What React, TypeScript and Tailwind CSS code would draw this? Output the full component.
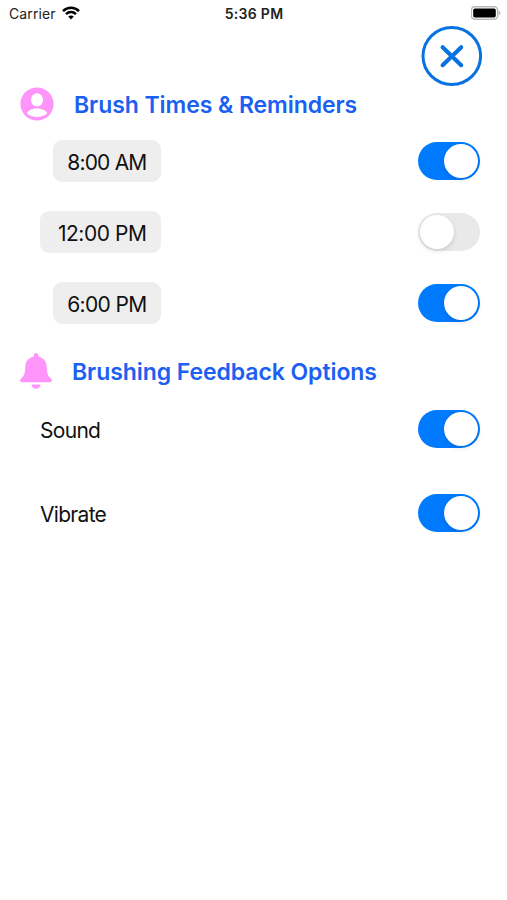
import type { ReactNode } from 'react'

const alarms = [
  { time: '8:00 AM', on: true, size: 'w-[108px] tracking-[-0.8px]' },
  { time: '12:00 PM', on: false, size: 'w-[121px] tracking-[-0.45px]' },
  { time: '6:00 PM', on: true, size: 'w-[108px] tracking-[-0.65px]' },
]

function StatusBar() {
  return (
    <header className="grid grid-cols-3 h-[26px] pl-[9px] pr-[6px] pt-[1px] items-center text-[#222]">
      <div className="flex items-center gap-[6px]">
        <span className="w-[47px] whitespace-nowrap text-[14px] tracking-[0.1px]">Carrier</span>
        <svg className="w-[18px] h-[14px] -mt-[1px]" viewBox="0 0 18 14" fill="none" stroke="#000" strokeWidth="2.5">
          <path d="M1 5.1C5.5 0.6 12.5 0.6 17 5.1" />
          <path d="M4 8.2C6.8 5.4 11.2 5.4 14 8.2" />
          <path d="M9 13.4L6.2 10.5C7.8 9 10.2 9 11.8 10.5Z" fill="#000" stroke="none" />
        </svg>
      </div>
      <span className="pr-[2px] text-center font-semibold text-[14px] tracking-[0.3px] whitespace-nowrap">5:36 PM</span>
      <svg className="w-[30px] h-[14px] -mt-[1px] justify-self-end" viewBox="0 0 30 14">
        <rect x="0.3" y="0.8" width="26.4" height="12.4" rx="3.6" fill="#fff" stroke="#b9b9b9" strokeWidth="1.5" />
        <rect x="2.2" y="2.6" width="22.6" height="8.8" rx="1.6" fill="#000" />
        <path d="M27.9 4.8C29.8 5.5 29.8 8.5 27.9 9.2Z" fill="#b0b0b0" />
      </svg>
    </header>
  )
}

function Toggle({ on }: { on: boolean }) {
  return (
    <button
      role="switch"
      aria-checked={on}
      className={`flex items-center w-[62px] h-[38px] px-[2px] rounded-full ${on ? 'bg-[#007aff] justify-end' : 'bg-[#e9e9ea] justify-start'}`}
    >
      <span className="w-[34px] h-[34px] rounded-full bg-white shadow-[0_2px_5px_rgba(0,0,0,0.12)]" />
    </button>
  )
}

function Heading({ icon, children }: { icon: ReactNode; children: ReactNode }) {
  return (
    <div className="flex items-center h-[36px] pl-[20px]">
      {icon}
      <h2 className="pt-[2px] text-[23px] font-semibold tracking-[-0.07px] text-[#1c60f2] whitespace-nowrap">{children}</h2>
    </div>
  )
}

export default function App() {
  return (
    <main className="w-full min-h-screen bg-white text-[#111] font-[Inter,'Liberation_Sans',sans-serif]">
      <StatusBar />

      {/* Close button */}
      <div className="flex justify-end h-[60px] pr-[25px]">
        <button aria-label="Close">
          <svg className="w-[61px] h-[60px]" viewBox="0 0 61 60" fill="none" stroke="#0873e0">
            <ellipse cx="30.8" cy="30" rx="28.8" ry="28.5" strokeWidth="3" />
            <path d="M21.6 21.2L40.2 39.2M40.2 21.2L21.6 39.2" strokeWidth="4.1" strokeLinecap="round" />
          </svg>
        </button>
      </div>

      <Heading
        icon={
          <svg className="w-[34px] h-[34px] mr-[20px]" viewBox="0 0 34 34">
            <circle cx="17" cy="17" r="16.6" fill="#ff94fb" />
            <ellipse cx="17" cy="12.8" rx="6.1" ry="6.5" fill="#fff" />
            <path d="M6.8 26.2C8.5 23.2 12.5 21.6 17 21.6S25.5 23.2 27.2 26.2C24.7 28.8 21 30 17 30S9.3 28.8 6.8 26.2Z" fill="#fff" />
          </svg>
        }
      >
        Brush Times &amp; Reminders
      </Heading>

      {/* Brush times */}
      <ul className="flex flex-col gap-[29px] mt-[18px] pl-[40px] pr-[27px]">
        {alarms.map(({ time, on, size }) => (
          <li key={time} className="flex items-center justify-between h-[42px]">
            <div className="flex justify-end w-[121px]">
              <span className={`flex items-center justify-end h-[42px] pt-[3px] pr-[14.5px] rounded-[9px] bg-[#eeeeef] text-[21px] whitespace-nowrap ${size}`}>
                {time}
              </span>
            </div>
            <Toggle on={on} />
          </li>
        ))}
      </ul>

      <div className="mt-[29px]">
        <Heading
          icon={
            <svg className="w-[32px] h-[36px] mr-[20px]" viewBox="0 0 32 36" fill="#ff94fb">
              <path d="M16 0C14.6 0 13.8 1.1 13.8 2.6V3.5C8.8 4.5 5.5 8.3 5.3 13.2C5.1 20.5 4.3 22.5 1.1 25.5C0.4 26.3 0.1 26.9 0.1 27.6C0.1 28.7 0.9 29.2 2.1 29.2H29.9C31.1 29.2 31.9 28.7 31.9 27.6C31.9 26.9 31.6 26.3 30.9 25.5C27.7 22.5 26.9 20.5 26.7 13.2C26.5 8.3 23.2 4.5 18.2 3.5V2.6C18.2 1.1 17.4 0 16 0Z" />
              <path d="M11.5 31.4H20.5C20.2 34 18.4 35.7 16 35.7S11.8 34 11.5 31.4Z" />
            </svg>
          }
        >
          Brushing Feedback Options
        </Heading>
      </div>

      {/* Feedback options */}
      <ul className="flex flex-col gap-[46px] mt-[21px] pl-[40px] pr-[27px]">
        {['Sound', 'Vibrate'].map((label) => (
          <li key={label} className="flex items-center justify-between h-[38px]">
            <span className="pt-[3px] text-[21px] tracking-[-0.7px]">{label}</span>
            <Toggle on />
          </li>
        ))}
      </ul>
    </main>
  )
}
